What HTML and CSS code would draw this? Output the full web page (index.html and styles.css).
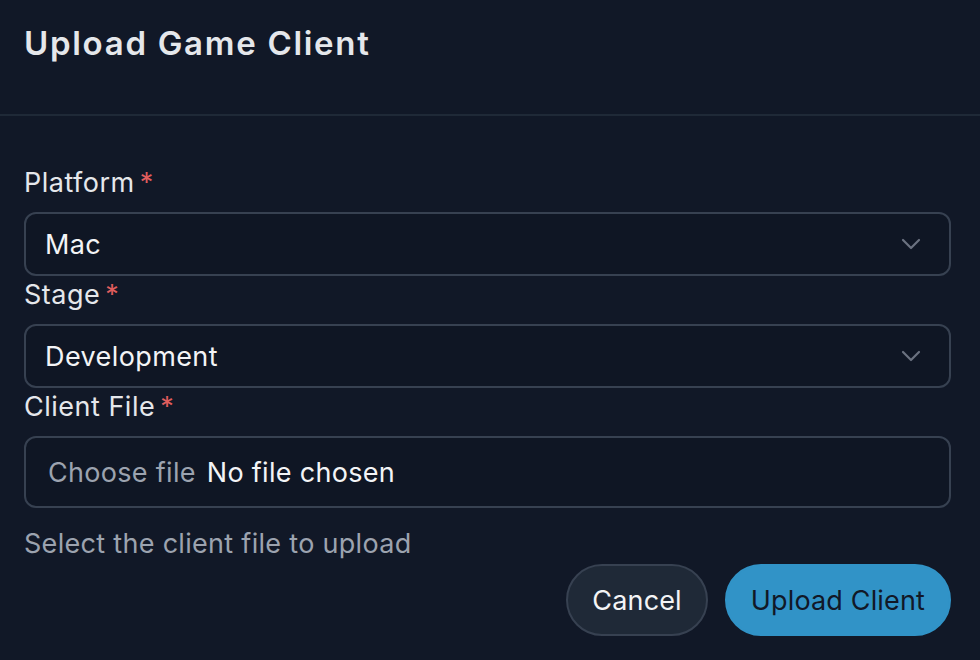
FILE: index.html
```html
<!DOCTYPE html>
<html lang="en">
<head>
<meta charset="utf-8">
<title>Upload Game Client</title>
<link rel="stylesheet" href="styles.css">
</head>
<body>
<div class="dialog">
  <header class="dialog-header">
    <h1 class="dialog-title">Upload Game Client</h1>
  </header>
  <form class="dialog-body">
    <div class="field">
      <label class="field-label">Platform<span class="req">*</span></label>
      <div class="select">
        <span class="select-value">Mac</span>
        <svg class="chevron" width="20" height="12" viewBox="0 0 20 12"><path d="M2 2 L10 10 L18 2" fill="none" stroke="#6b7280" stroke-width="2.2" stroke-linecap="round" stroke-linejoin="round"/></svg>
      </div>
    </div>
    <div class="field">
      <label class="field-label">Stage<span class="req">*</span></label>
      <div class="select">
        <span class="select-value">Development</span>
        <svg class="chevron" width="20" height="12" viewBox="0 0 20 12"><path d="M2 2 L10 10 L18 2" fill="none" stroke="#6b7280" stroke-width="2.2" stroke-linecap="round" stroke-linejoin="round"/></svg>
      </div>
    </div>
    <div class="field">
      <label class="field-label">Client File<span class="req">*</span></label>
      <div class="file">
        <span class="file-btn">Choose file</span>
        <span class="file-name">No file chosen</span>
      </div>
      <p class="help">Select the client file to upload</p>
    </div>
    <div class="actions">
      <button type="button" class="btn btn-cancel">Cancel</button>
      <button type="button" class="btn btn-primary">Upload Client</button>
    </div>
  </form>
</div>
</body>
</html>
```
FILE: styles.css
```css
* { box-sizing: border-box; }
html, body {
  margin: 0;
  padding: 0;
  background: #111827;
  height: 100%;
}
body {
  font-family: Inter, "Noto Sans", sans-serif;
  color: #e5e7eb;
}
.dialog {
  width: 980px;
  height: 660px;
  overflow: hidden;
}
.dialog-header {
  height: 116px;
  border-bottom: 2px solid #1f2937;
  padding: 21px 24px 0;
}
.dialog-title {
  margin: 0;
  font-size: 33px;
  line-height: 44px;
  font-weight: 600;
  color: #e5e7eb;
  letter-spacing: 1.7px;
}
.dialog-body {
  padding: 48px 29px 0 24px;
  display: flex;
  flex-direction: column;
}
.field-label {
  display: block;
  font-size: 27px;
  line-height: 32px;
  color: #e5e7eb;
  padding-top: 3px;
  margin-bottom: 13px;
  letter-spacing: 0.5px;
}
.req {
  color: #e05d5d;
  margin-left: 5px;
}
.select {
  height: 64px;
  border: 2px solid #374151;
  border-radius: 12px;
  background: #0f1624;
  display: flex;
  align-items: center;
  justify-content: space-between;
  padding: 0 28px 0 19px;
  font-size: 27px;
  letter-spacing: 0.4px;
  color: #f3f4f6;
}
.chevron { display: block; }
.file {
  height: 72px;
  border: 2px solid #374151;
  border-radius: 12px;
  background: #0f1624;
  display: flex;
  align-items: center;
  padding: 0 22px;
  font-size: 27px;
  letter-spacing: 0.3px;
  gap: 11px;
}
.file-btn { color: #9ca3af; }
.file-name { color: #f3f4f6; }
.help {
  margin: 20px 0 0;
  font-size: 27px;
  line-height: 32px;
  color: #9ca3af;
  letter-spacing: 0.3px;
}
.actions {
  display: flex;
  justify-content: flex-end;
  gap: 17px;
  margin-top: 4px;
}
.btn {
  height: 72px;
  border-radius: 36px;
  font-family: inherit;
  font-size: 27px;
  letter-spacing: 0.15px;
  padding: 0 24px;
  cursor: pointer;
}
.btn-cancel {
  background: #1f2937;
  border: 2px solid #374151;
  color: #f3f4f6;
}
.btn-primary {
  background: #3193c7;
  border: 2px solid #3193c7;
  color: #111827;
}
```
